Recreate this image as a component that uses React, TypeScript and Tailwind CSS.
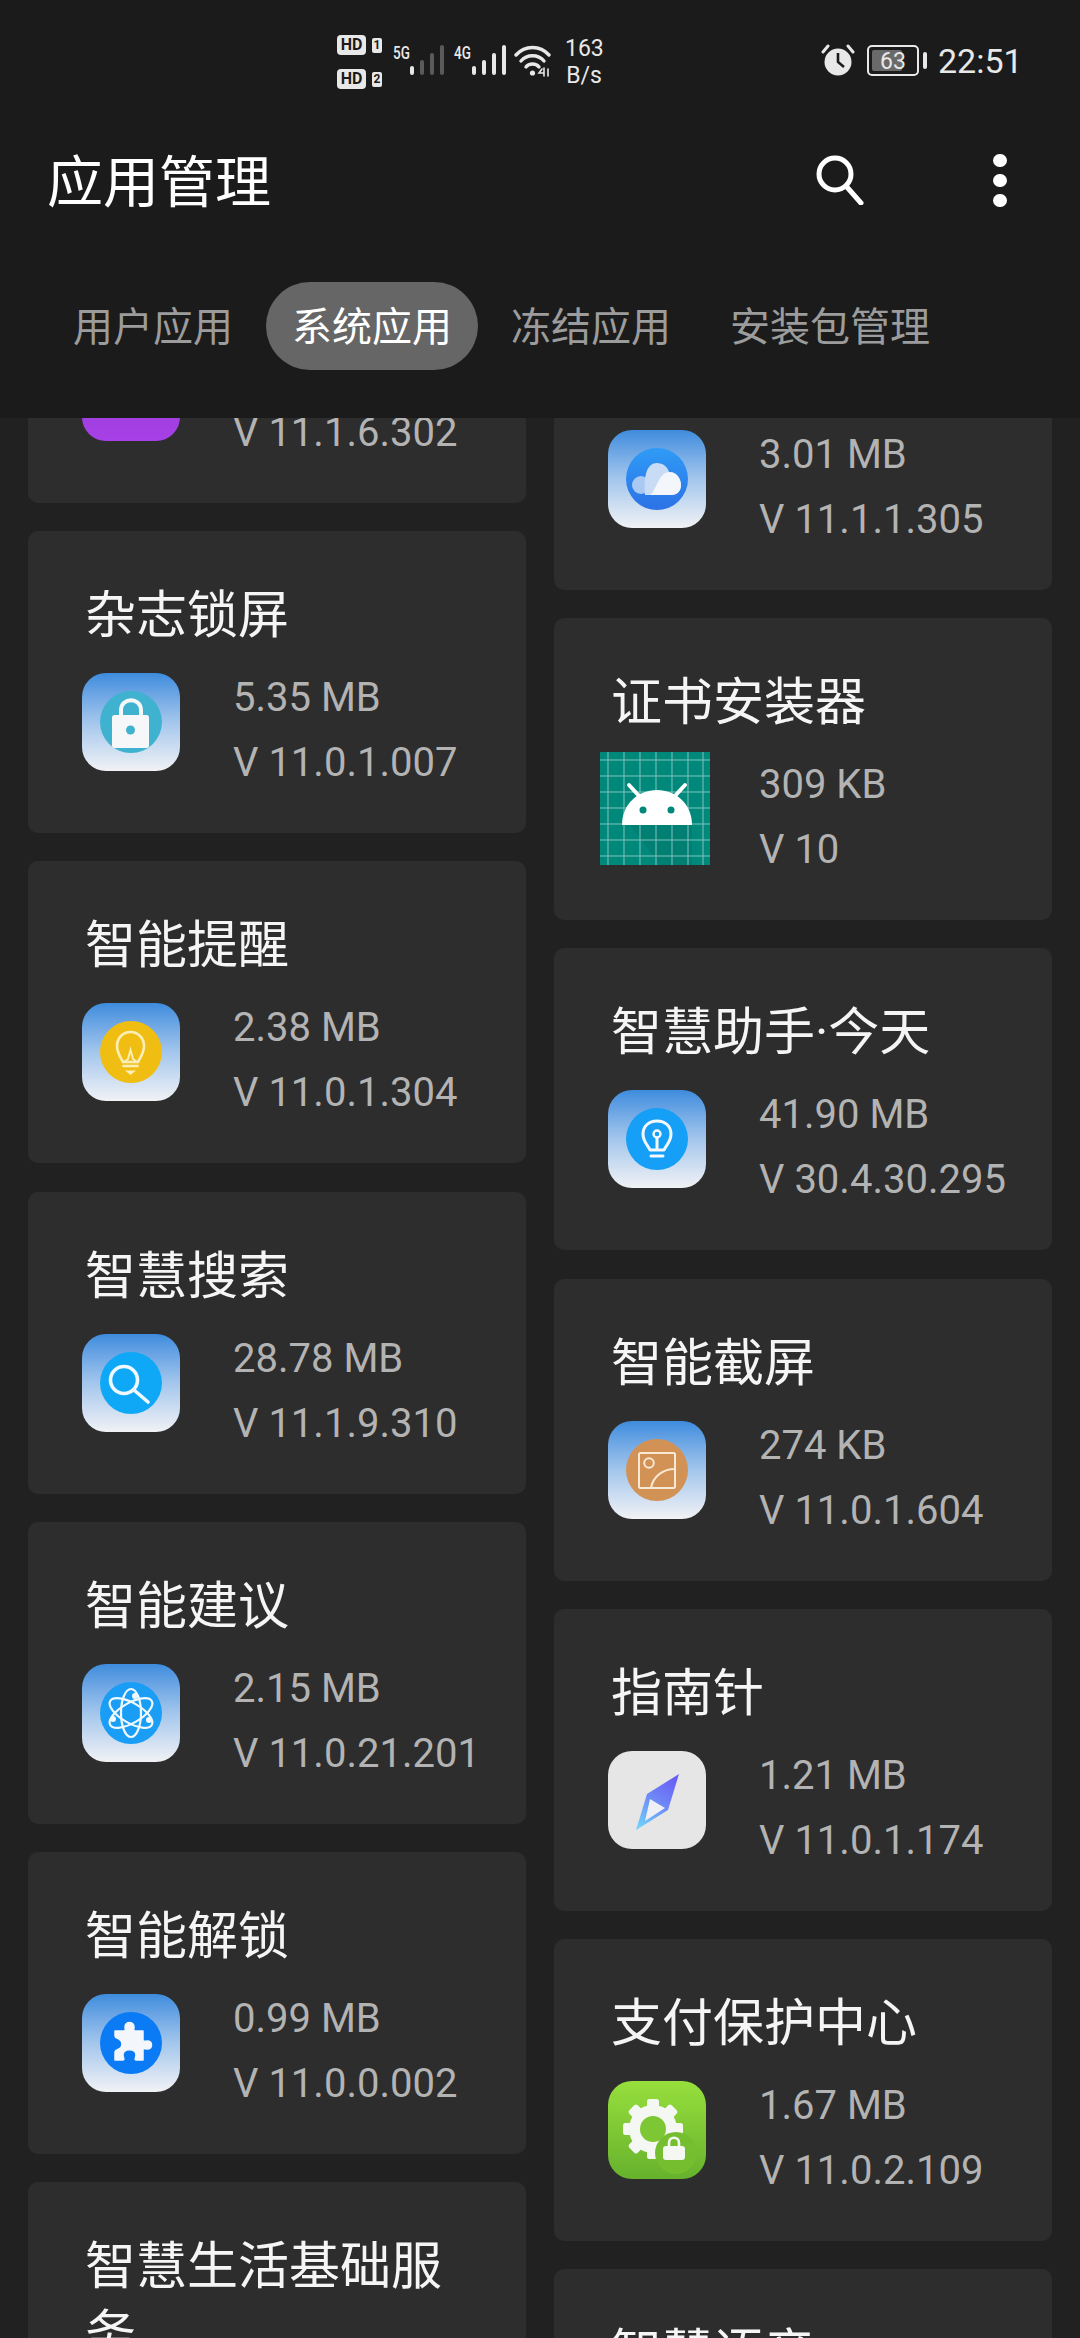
import type { ReactNode } from 'react';

const Gloss = ({ children }: { children: ReactNode }) => (
  <div className="w-[98px] h-[98px] rounded-[24px] bg-gradient-to-b from-[#3d8cdd] via-[#a3c6ec] to-[#f1f2f5] overflow-hidden">
    <svg viewBox="0 0 98 98" className="w-full h-full">
      {children}
    </svg>
  </div>
);

const CloudIcon = () => (
  <Gloss>
    <defs>
      <linearGradient id="cloudDisc" x1="0" y1="0" x2="0" y2="1">
        <stop offset="0" stopColor="#2f9bf6" />
        <stop offset="1" stopColor="#2c72e6" />
      </linearGradient>
    </defs>
    <circle cx="49" cy="49" r="31" fill="url(#cloudDisc)" />
    <circle cx="33" cy="55" r="9" fill="#a9c9f3" />
    <path d="M37 65 C36 50 37 33 49 33 C59 33 61 42 62 44 C68 42 73 49 73 55 C73 62 68 65 63 65 Z" fill="#c9dcf6" />
    <path d="M42 65 C48 62 50 42 62 42 C69 42 73 49 73 55 C73 62 68 65 63 65 Z" fill="#f3f6fb" />
  </Gloss>
);

const LockIcon = () => (
  <Gloss>
    <circle cx="49" cy="49" r="31" fill="#3fb2cf" />
    <path d="M39 44 V37 C39 24 59 24 59 37 V44" fill="none" stroke="#f5f7f9" strokeWidth="4" />
    <rect x="30" y="42" width="37" height="33" rx="2.5" fill="#f5f7f9" />
    <circle cx="48.5" cy="57" r="4.5" fill="#3fb2cf" />
  </Gloss>
);

const BulbIcon = () => (
  <Gloss>
    <circle cx="49" cy="49" r="31" fill="#f0be12" />
    <path d="M41 59 C38 53 35 50 35 43 C35 35 41 29 48.5 29 C56 29 62 35 62 43 C62 50 59 53 56 59 Z" fill="none" stroke="#fbeeb8" strokeWidth="2.6" />
    <path d="M42 59 L46 56 L48.5 47 L51 56 L55 59" fill="none" stroke="#fbeeb8" strokeWidth="2" />
    <path d="M41.5 63 H55.5" stroke="#fbeeb8" strokeWidth="2.6" strokeLinecap="round" />
    <path d="M43 67.5 H54 L48.5 72 Z" fill="#fbeeb8" />
  </Gloss>
);

// blue disc with a plain white bulb, the assistant's icon
const AssistantIcon = () => (
  <Gloss>
    <circle cx="49" cy="49" r="31" fill="#169ff6" />
    <path d="M42 60 C40 55 35 52 35 44 C35 36 41 31 49 31 C57 31 63 36 63 44 C63 52 58 55 56 60 Z" fill="none" stroke="#f3f8fd" strokeWidth="3" strokeLinejoin="round" />
    <circle cx="49" cy="44" r="3.5" fill="none" stroke="#f3f8fd" strokeWidth="2.4" />
    <path d="M49 48 V59 M43 66 H55" stroke="#f3f8fd" strokeWidth="3" strokeLinecap="round" />
  </Gloss>
);

const SearchIcon = () => (
  <Gloss>
    <circle cx="49" cy="49" r="31" fill="#0fa8f7" />
    <circle cx="42" cy="46" r="13.5" fill="none" stroke="#eef8fe" strokeWidth="3.6" />
    <path d="M52 56 L66 68" stroke="#eef8fe" strokeWidth="3.6" strokeLinecap="round" />
  </Gloss>
);

const AtomIcon = () => (
  <Gloss>
    <circle cx="49" cy="49" r="31" fill="#1a9ef5" />
    <g fill="none" stroke="#eef8fe" strokeWidth="2.2">
      <ellipse cx="49" cy="49" rx="24" ry="10" transform="rotate(30 49 49)" />
      <ellipse cx="49" cy="49" rx="24" ry="10" transform="rotate(90 49 49)" />
      <ellipse cx="49" cy="49" rx="24" ry="10" transform="rotate(150 49 49)" />
    </g>
    <circle cx="53" cy="32" r="3" fill="#eef8fe" />
    <circle cx="31" cy="55" r="3" fill="#eef8fe" />
    <circle cx="67" cy="56" r="3" fill="#eef8fe" />
  </Gloss>
);

const PuzzleIcon = () => (
  <Gloss>
    <circle cx="49" cy="49" r="31" fill="#0a7bf5" />
    <path
      d="M33 37 H42 C44 37 43 35 43 33 C43 27 52 27 52 33 C52 35 51 37 53 37 H61 V46 C61 48 63 47 65 47 C71 47 71 55 65 55 C63 55 61 54 61 56 V66 H54 C52 66 54 64 54 61 C54 54 41 54 41 61 C41 64 43 66 41 66 H33 V58 C33 56 35 56 37 55 C41 53 41 47 37 45 C35 44 33 44 33 42 Z"
      fill="#f3f6fa"
      stroke="#f3f6fa"
      strokeWidth="1.5"
      strokeLinejoin="round"
    />
  </Gloss>
);

const PictureIcon = () => (
  <Gloss>
    <circle cx="49" cy="49" r="31" fill="#d29155" />
    <g fill="none" stroke="#f8e8d4" strokeWidth="2">
      <rect x="31" y="32" width="36" height="35" rx="1.5" />
      <circle cx="41" cy="42" r="4.8" />
      <path d="M43 67 C45 56 54 48 67 48" />
    </g>
  </Gloss>
);

const CompassIcon = () => (
  <div className="w-[98px] h-[98px] rounded-[24px] bg-[#e6e6e6] overflow-hidden">
    <svg viewBox="0 0 98 98" className="w-full h-full">
      <defs>
        <linearGradient id="needle" x1="0.7" y1="0" x2="0.2" y2="1">
          <stop offset="0" stopColor="#6a5ff5" />
          <stop offset="0.5" stopColor="#6f8cf6" />
          <stop offset="1" stopColor="#6fd0fb" />
        </linearGradient>
      </defs>
      <path d="M71 23 L60 59 L28 79 L39 43 Z" fill="url(#needle)" />
      <path d="M42 48 L57 57 L37 70 Z" fill="#eef0f6" />
    </svg>
  </div>
);

const GearLockIcon = () => (
  <div className="w-[98px] h-[98px] rounded-[24px] bg-gradient-to-b from-[#97df3c] to-[#66b22d] overflow-hidden">
    <svg viewBox="0 0 98 98" className="w-full h-full">
      <g fill="#f5f7f3">
        <circle cx="45" cy="48" r="24" />
        {[0, 45, 90, 135, 180, 225, 270, 315].map((deg) => (
          <rect key={deg} x="39" y="18" width="12" height="14" rx="2.5" transform={`rotate(${deg} 45 48)`} />
        ))}
      </g>
      <circle cx="45" cy="48" r="13" fill="#7cc733" />
      <circle cx="68" cy="72" r="21" fill="#75be30" />
      <path d="M61 66 V62 C61 55 71 55 71 62 V66" fill="none" stroke="#f5f7f3" strokeWidth="2.6" />
      <rect x="55" y="65" width="22" height="14" rx="3" fill="#f5f7f3" />
    </svg>
  </div>
);

const AndroidIcon = () => (
  <svg viewBox="0 0 110 113" className="w-[112px] h-[113px] -ml-[9px] -mr-[5px] -mt-[8px] shrink-0 block">
    <rect width="110" height="113" fill="#00897b" />
    <path d="M75 73 L92 73 L92 113 L60 113 L30 73 Z" fill="#007f72" />
    <g stroke="#7fc4bd" strokeWidth="1">
      {[8, 24, 40, 56, 72, 88, 103].map((x) => (
        <path key={x} d={`M${x} 0 V113`} />
      ))}
      {[8, 24, 40, 56, 72, 88, 104].map((y) => (
        <path key={y} d={`M0 ${y} H110`} />
      ))}
    </g>
    <path d="M29 33 L40 45 M85 33 L74 45" stroke="#fff" strokeWidth="4" strokeLinecap="round" />
    <path d="M22 73 C22 52 38 38 57 38 C76 38 92 52 92 73 Z" fill="#fff" />
    <circle cx="43" cy="58" r="3.5" fill="#00897b" />
    <circle cx="71" cy="58" r="3.5" fill="#00897b" />
  </svg>
);

const PurpleIcon = () => <div className="w-[98px] h-[98px] rounded-[24px] bg-gradient-to-b from-[#8f3bd0] to-[#a740e6]" />;

interface AppItem {
  name: string;
  size: string;
  version: string;
  icon: ReactNode;
}

// first card of each column is scrolled under the header, only its lower part shows
const leftApps: AppItem[] = [
  { name: '', size: '', version: 'V 11.1.6.302', icon: <PurpleIcon /> },
  { name: '杂志锁屏', size: '5.35 MB', version: 'V 11.0.1.007', icon: <LockIcon /> },
  { name: '智能提醒', size: '2.38 MB', version: 'V 11.0.1.304', icon: <BulbIcon /> },
  { name: '智慧搜索', size: '28.78 MB', version: 'V 11.1.9.310', icon: <SearchIcon /> },
  { name: '智能建议', size: '2.15 MB', version: 'V 11.0.21.201', icon: <AtomIcon /> },
  { name: '智能解锁', size: '0.99 MB', version: 'V 11.0.0.002', icon: <PuzzleIcon /> },
  { name: '智慧生活基础服务', size: '', version: '', icon: null },
];

const rightApps: AppItem[] = [
  { name: '', size: '3.01 MB', version: 'V 11.1.1.305', icon: <CloudIcon /> },
  { name: '证书安装器', size: '309 KB', version: 'V 10', icon: <AndroidIcon /> },
  { name: '智慧助手·今天', size: '41.90 MB', version: 'V 30.4.30.295', icon: <AssistantIcon /> },
  { name: '智能截屏', size: '274 KB', version: 'V 11.0.1.604', icon: <PictureIcon /> },
  { name: '指南针', size: '1.21 MB', version: 'V 11.0.1.174', icon: <CompassIcon /> },
  { name: '支付保护中心', size: '1.67 MB', version: 'V 11.0.2.109', icon: <GearLockIcon /> },
  { name: '智慧语音', size: '', version: '', icon: null },
];

const AppCard = ({ app }: { app: AppItem }) => (
  <div className="h-[302px] shrink-0 rounded-[10px] bg-[#2d2d2d] pt-[51px] pl-[54px] overflow-hidden">
    <div className="min-h-[68px] text-[51px] leading-[68px] text-[#f5f5f5] pl-[3px] pr-[40px]">{app.name}</div>
    <div className="flex mt-[15px]">
      <div className="w-[98px] pt-[8px] shrink-0">{app.icon}</div>
      <div className="ml-[53px] text-[40px] leading-[65px] text-[#b3b3b3] whitespace-nowrap">
        <div className="min-h-[65px]">{app.size}</div>
        <div>{app.version}</div>
      </div>
    </div>
  </div>
);

const SignalBars = ({ lit }: { lit: number }) => (
  <div className="flex items-end gap-[6px] h-[30px]">
    {[9, 15, 22, 30].map((h, i) => (
      <div
        key={h}
        style={{ height: h }}
        className={i < lit ? 'w-[4px] rounded-[2px] bg-[#e8e8e8]' : 'w-[4px] rounded-[2px] bg-[#5a5a5a]'}
      />
    ))}
  </div>
);

const HdBadge = ({ sim }: { sim: string }) => (
  <div className="flex items-center gap-[6px]">
    <div className="w-[29px] h-[20px] rounded-[4px] bg-[#e8e8e8] text-[#1b1b1b] text-[16px] leading-[20px] font-bold text-center">HD</div>
    <div className="w-[10px] h-[15px] rounded-[2px] bg-[#e8e8e8] text-[#1b1b1b] text-[12px] leading-[15px] font-bold text-center">{sim}</div>
  </div>
);

const StatusBar = () => (
  <div className="h-[84px] pt-[35px] pl-[337px] flex items-start text-[#e8e8e8]">
    <div className="flex flex-col gap-[14px]">
      <HdBadge sim="1" />
      <HdBadge sim="2" />
    </div>
    <div className="flex items-start ml-[11px] mt-[9px]">
      <span className="text-[18px] leading-[18px] font-medium w-[17px] whitespace-nowrap scale-x-75 origin-left">5G</span>
      <div className="mt-[1px]"><SignalBars lit={1} /></div>
      <span className="text-[18px] leading-[18px] font-medium w-[18px] ml-[10px] whitespace-nowrap scale-x-75 origin-left">4G</span>
      <div className="mt-[1px]"><SignalBars lit={4} /></div>
    </div>
    <svg viewBox="0 0 38 33" className="w-[38px] h-[33px] ml-[8px] mt-[9px]" fill="none" stroke="#e8e8e8" strokeWidth="3.4" strokeLinecap="round">
      <path d="M2 11 C11 1 26 1 35 11" />
      <path d="M7 17 C13 10 24 10 30 17" />
      <path d="M12 23 C15 19 22 19 25 23" />
      <circle cx="18.5" cy="29" r="2.6" fill="#e8e8e8" stroke="none" />
      <path d="M28 25 L25 29 H30 M30 24 V32 M34 25 V32" strokeWidth="1.6" />
    </svg>
    <div className="ml-[13px] w-[38px] text-center text-[23px] leading-[27px] whitespace-nowrap">
      <div>163</div>
      <div className="-mx-[2px]">B/s</div>
    </div>
    <svg viewBox="0 0 34 32" className="w-[34px] h-[32px] ml-[218px] mt-[9px]">
      <circle cx="17" cy="18" r="13.5" fill="#e8e8e8" />
      <path d="M17 9 V18 L23 23" fill="none" stroke="#1b1b1b" strokeWidth="2.6" />
      <path d="M2 8 L7 2 M32 8 L27 2" stroke="#e8e8e8" strokeWidth="3" strokeLinecap="round" />
    </svg>
    <div className="ml-[12px] mt-[10px] w-[52px] h-[31px] rounded-[5px] border-2 border-[#e8e8e8] p-[3px] flex">
      <div className="w-[30px] rounded-[2px] bg-[#6a6a6a]" />
      <span className="-ml-[29px] w-[40px] text-center text-[23px] leading-[23px]">63</span>
    </div>
    <div className="ml-[4px] mt-[17px] w-[4px] h-[17px] rounded-[2px] bg-[#e8e8e8]" />
    <div className="ml-[11px] mt-[6px] text-[34px] leading-[40px] font-normal">22:51</div>
  </div>
);

const tabs = ['用户应用', '系统应用', '冻结应用', '安装包管理'];

export default function App() {
  return (
    <div className="w-[1080px] h-[2338px] overflow-hidden flex flex-col bg-[#212121] font-[Roboto,'Noto_Sans_CJK_SC',sans-serif]">
      <div className="h-[418px] shrink-0 bg-[#1b1b1b]">
        <StatusBar />
        <div className="flex items-center h-[72px] mt-[60px] pl-[47px]">
          <h1 className="w-[224px] mt-[6px] text-[56px] leading-[72px] text-white font-normal">应用管理</h1>
          <svg viewBox="0 0 48 50" className="w-[48px] h-[50px] ml-[545px]" fill="none" stroke="#fff" strokeWidth="5">
            <circle cx="19" cy="19" r="16" />
            <path d="M30 31 L45 48" strokeLinecap="round" />
          </svg>
          <div className="flex flex-col gap-[7px] ml-[129px]">
            <div className="w-[14px] h-[13px] rounded-full bg-white" />
            <div className="w-[14px] h-[13px] rounded-full bg-white" />
            <div className="w-[14px] h-[13px] rounded-full bg-white" />
          </div>
        </div>
        <div className="flex gap-[7px] mt-[66px] pl-[47px]">
          {tabs.map((tab, i) => (
            <div
              key={tab}
              className={
                i === 1
                  ? 'h-[88px] px-[26px] rounded-[44px] bg-[#666666] text-white text-[40px] leading-[92px]'
                  : 'h-[88px] px-[26px] text-[#9c9c9c] text-[40px] leading-[92px]'
              }
            >
              {tab}
            </div>
          ))}
        </div>
      </div>
      <div className="grid grid-cols-2 gap-x-[28px] px-[28px] overflow-hidden flex-1">
        <div className="flex flex-col gap-[28.2px] -mt-[217px]">
          {leftApps.map((app, i) => (
            <AppCard key={i} app={app} />
          ))}
        </div>
        <div className="flex flex-col gap-[28.2px] -mt-[130px]">
          {rightApps.map((app, i) => (
            <AppCard key={i} app={app} />
          ))}
        </div>
      </div>
    </div>
  );
}
